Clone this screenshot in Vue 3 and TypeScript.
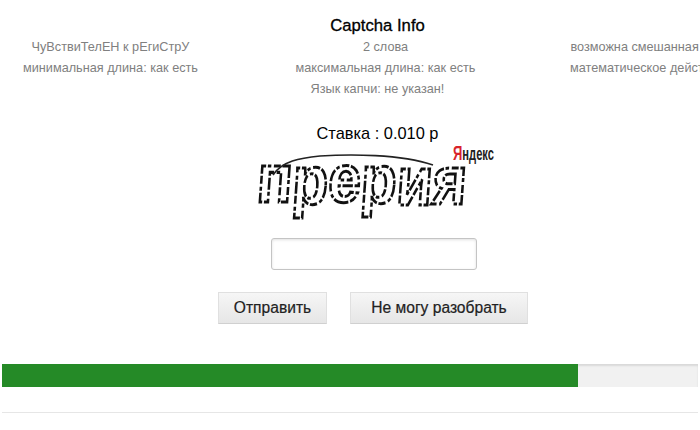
<script setup lang="ts">
const columns: string[][] = [
  ['ЧуВствиТелЕН к рЕгиСтрУ', 'минимальная длина: как есть'],
  ['2 слова', 'максимальная длина: как есть'],
  ['возможна смешанная система', 'математическое действие: нет']
]
const progress = 82.8
</script>

<template>
  <div class="frame">
    <div class="page">
      <h3 class="title">Captcha Info</h3>
      <div class="info">
        <div v-for="(col, i) in columns" :key="i" class="info-col">
          <p v-for="line in col" :key="line">{{ line }}</p>
        </div>
      </div>
      <p class="lang">Язык капчи: не указан!</p>

      <div class="rate">Ставка : 0.010 р</div>

      <svg class="captcha" width="250" height="80" viewBox="0 0 250 80">
        <g class="word">
          <text x="7" y="59" dy="0 2 -2 1 2 -1" textLength="210" lengthAdjust="spacingAndGlyphs">прерия</text>
        </g>
        <path class="arc" d="M23 32 C32 18 50 15 70 13 C100 11 150 11 183 22" />
        <text class="ya" x="203" y="17" textLength="41" lengthAdjust="spacingAndGlyphs"><tspan class="ya-red">Я</tspan>ндекс</text>
      </svg>

      <input class="answer" type="text" />

      <div class="buttons">
        <button>Отправить</button>
        <button>Не могу разобрать</button>
      </div>

      <div class="bar">
        <div class="bar-fill" :style="{ width: progress + '%' }"></div>
      </div>
      <div class="rule"></div>
    </div>
  </div>
</template>

<style>
html, body {
  margin: 0;
  background: #fff;
  overflow: hidden;
}
</style>

<style scoped>
.frame {
  width: 700px;
  height: 430px;
  overflow: hidden;
}
.page {
  width: 755px;
  font-family: "Liberation Sans", Arial, sans-serif;
  display: flex;
  flex-direction: column;
  align-items: center;
}
.title {
  margin: 16px 0 0;
  font-size: 16.7px;
  line-height: 20px;
  font-weight: normal;
  color: #000;
  -webkit-text-stroke: 0.3px #000;
}
.info {
  display: flex;
  align-self: flex-start;
  margin: 1px 0 0 -27px;
}
.info-col {
  width: 275px;
  flex-shrink: 0;
  text-align: center;
}
.info-col p,
.lang {
  margin: 0;
  font-size: 12.7px;
  line-height: 21px;
  color: #808080;
  white-space: nowrap;
}
.rate {
  margin: 23px 0 0;
  font-size: 16.4px;
  line-height: 20px;
  color: #000;
}
.captcha {
  display: block;
  flex-shrink: 0;
  margin: 0 0 0 -5px;
  overflow: visible;
}
.word text {
  font-family: "Liberation Sans", Arial, sans-serif;
  font-size: 68px;
  font-weight: bold;
  fill: #fff;
  stroke: #111;
  stroke-width: 3;
  stroke-dasharray: 12 2 4 3 8 2;
  transform: skewX(-4deg);
  transform-origin: 110px 40px;
}
.arc {
  fill: none;
  stroke: #222;
  stroke-width: 1.6;
}
.ya {
  font-family: "Liberation Sans", Arial, sans-serif;
  font-size: 18px;
  font-weight: bold;
  fill: #222;
}
.ya-red {
  fill: #d8232a;
  font-size: 21px;
}
.answer {
  display: block;
  box-sizing: border-box;
  width: 206px;
  height: 32px;
  margin: 15px 0 0 -7px;
  padding: 0 6px;
  border: 1px solid #c4c4c4;
  border-radius: 3px;
  box-shadow: inset 0 1px 3px rgba(0, 0, 0, 0.12);
  background: #fff;
}
.buttons {
  display: flex;
  gap: 23px;
  margin: 22px 0 0 -9px;
}
.buttons button {
  height: 32px;
  border: 1px solid #e0e0e0;
  border-bottom-color: #d0d0d0;
  background: linear-gradient(#f6f6f6, #e6e6e6);
  font-family: "Liberation Sans", Arial, sans-serif;
  font-size: 15.6px;
  color: #222;
  -webkit-text-stroke: 0.2px #222;
  padding: 0;
  cursor: pointer;
}
.buttons button:first-child {
  width: 109px;
}
.buttons button:last-child {
  width: 178px;
}
.bar {
  align-self: flex-start;
  width: 696px;
  height: 23px;
  margin: 40px 0 0 2px;
  background: #f1f1f1;
  box-shadow: inset 0 2px 2px rgba(0, 0, 0, 0.1);
}
.bar-fill {
  height: 100%;
  background: #258a27;
}
.rule {
  align-self: flex-start;
  width: 696px;
  height: 1px;
  margin: 25px 0 0 2px;
  background: #e6e6e6;
}
</style>
